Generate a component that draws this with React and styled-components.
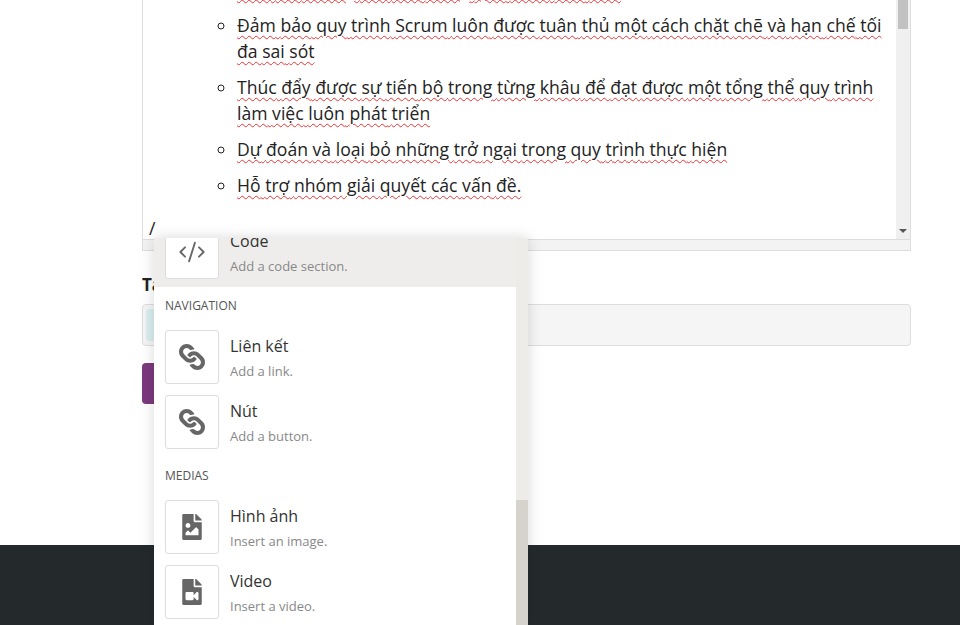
import styled, { createGlobalStyle } from 'styled-components';
import { FaLink, FaFileImage, FaFileVideo } from 'react-icons/fa';
import { CodeXml } from 'lucide-react';

const Global = createGlobalStyle`
  body { margin: 0; background: #fff; font-family: "Open Sans", sans-serif; overflow: hidden; }
`;

const Page = styled.div`
  position: relative;
  height: 625px;
  display: flex;
  flex-direction: column;
`;

const Main = styled.div`
  padding: 0 49px 0 142px;
  height: 545px;
`;

const Editor = styled.div`
  border: 1px solid #ddd;
  border-top: none;
  display: flex;
  height: 239px;
`;

const Content = styled.div`
  flex: 1;
  overflow: hidden;
  display: flex;
  flex-direction: column;
  justify-content: flex-end;
  padding: 0 10px 0 4px;
  font-size: 17.6px;
  color: #222;
`;

const List = styled.ul`
  margin: 0 0 9px;
  padding-left: 90px;
  list-style: circle;
`;

const Item = styled.li`
  line-height: 26px;
  margin-bottom: 10px;
  span { text-decoration: underline wavy #e33 1px; text-underline-offset: 3px; }
`;

const Slash = styled.div`
  line-height: 22px;
  padding-left: 2px;
`;

const Scroll = styled.div`
  width: 14px;
  background: #f0f0f0;
  position: relative;
  &::before { content: ''; position: absolute; left: 2px; top: 0; width: 10px; height: 29px; background: #c1c1c1; }
  &::after { content: ''; position: absolute; left: 3px; bottom: 6px; border: 4px solid transparent; border-top: 4px solid #555; border-bottom: none; }
`;

const Resize = styled.div`
  height: 10px;
  border: 1px solid #ddd;
  border-top: none;
  background: #f3f3f3;
`;

const Label = styled.div`
  margin-top: 22px;
  font-weight: 700;
  font-size: 17px;
  color: #222;
`;

const Input = styled.div`
  margin-top: 8px;
  height: 40px;
  border: 1px solid #ddd;
  border-radius: 4px;
  background: #f5f5f5;
  &::before { content: ''; display: block; margin: 4px 0 0 3px; width: 12px; height: 32px; background: #d9eef0; border-radius: 3px; }
`;

const Button = styled.div`
  margin-top: 17px;
  width: 60px;
  height: 41px;
  background: #7b3a7d;
  border-radius: 4px;
`;

const Footer = styled.div`
  flex: 1;
  background: #242a2c;
`;

const Menu = styled.div`
  position: absolute;
  left: 154px;
  top: 238px;
  width: 374px;
  height: 387px;
  background: #fff;
  box-shadow: 0 0 14px rgba(0,0,0,0.15);
  display: flex;
  overflow: hidden;
`;

const MenuList = styled.div`
  flex: 1;
  margin-top: -19px;
`;

const MenuScroll = styled.div`
  width: 12px;
  background: #eeece9;
  display: flex;
  flex-direction: column;
  justify-content: flex-end;
  &::after { content: ''; height: 125px; background: #d6d3cd; }
`;

const Entry = styled.div`
  display: flex;
  gap: 11px;
  padding: 6px 11px 8px;
  background: ${p => (p.$active ? '#eeedeb' : 'transparent')};
  & + & { margin-top: -3px; }
`;

const IconBox = styled.div`
  width: 54px;
  height: 54px;
  flex: none;
  box-sizing: border-box;
  border: 1px solid #ddd;
  border-radius: 3px;
  background: #fff;
  color: #666;
  display: flex;
  align-items: center;
  justify-content: center;
`;

const Text = styled.div`
  padding-top: 5px;
`;

const Title = styled.div`
  font-size: 16px;
  color: #333;
  line-height: 22px;
`;

const Desc = styled.div`
  font-size: 13px;
  color: #888;
  margin-top: 5px;
`;

const Heading = styled.div`
  font-size: 12px;
  color: #555;
  padding: 11px 11px 10px;
  line-height: 16px;
`;

const entry = (icon, title, desc, active) => (
  <Entry $active={active}>
    <IconBox>{icon}</IconBox>
    <Text>
      <Title>{title}</Title>
      <Desc>{desc}</Desc>
    </Text>
  </Entry>
);

const U = ({ t }) => t.split(' ').map((w, i) => <span key={i}>{(i ? ' ' : '')}{w}</span>);

export default function App() {
  return (
    <Page>
      <Global />
      <Main>
        <Editor>
          <Content>
            <List>
              <Item><U t="Loại bỏ những rào cản trong quá trình làm việc" /></Item>
              <Item><U t="Đảm bảo quy trình Scrum luôn được tuân thủ một cách chặt chẽ và hạn chế tối đa sai sót" /></Item>
              <Item><U t="Thúc đẩy được sự tiến bộ trong từng khâu để đạt được một tổng thể quy trình làm việc luôn phát triển" /></Item>
              <Item><U t="Dự đoán và loại bỏ những trở ngại trong quy trình thực hiện" /></Item>
              <Item><U t="Hỗ trợ nhóm giải quyết các vấn đề." /></Item>
            </List>
            <Slash>/</Slash>
          </Content>
          <Scroll />
        </Editor>
        <Resize />
        <Label>Tags</Label>
        <Input />
        <Button />
      </Main>
      <Footer />
      <Menu>
        <MenuList>
          {entry(<CodeXml size={28} strokeWidth={1.6} />, 'Code', 'Add a code section.', true)}
          <Heading>NAVIGATION</Heading>
          {entry(<FaLink size={26} style={{ transform: 'rotate(90deg)' }} />, 'Liên kết', 'Add a link.')}
          {entry(<FaLink size={26} style={{ transform: 'rotate(90deg)' }} />, 'Nút', 'Add a button.')}
          <Heading>MEDIAS</Heading>
          {entry(<FaFileImage size={26} />, 'Hình ảnh', 'Insert an image.')}
          {entry(<FaFileVideo size={26} />, 'Video', 'Insert a video.')}
        </MenuList>
        <MenuScroll />
      </Menu>
    </Page>
  );
}
